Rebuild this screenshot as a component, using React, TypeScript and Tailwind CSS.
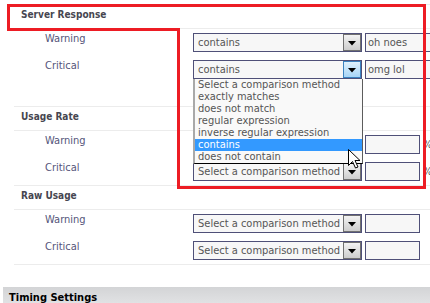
import React from 'react';

const font = "font-['DejaVu_Sans_Condensed','DejaVu_Sans',sans-serif]";

function Arrow({ focused }: { focused?: boolean }) {
  return (
    <div
      className={`flex h-full w-[18px] shrink-0 items-center justify-center border ${
        focused
          ? 'border-[#3b82c0] bg-gradient-to-b from-[#dff1fd] to-[#a7d5f6]'
          : 'border-[#707070] bg-gradient-to-b from-[#f3f3f3] to-[#cdcdcd]'
      }`}
    >
      <svg width="8" height="5" viewBox="0 0 8 5" className="mt-[2px]">
        <path d="M0 0h8L4 4.5z" fill="#000" />
      </svg>
    </div>
  );
}

const options = [
  'Select a comparison method',
  'exactly matches',
  'does not match',
  'regular expression',
  'inverse regular expression',
  'contains',
  'does not contain',
];

function Select({ value, open }: { value: string; open?: boolean }) {
  return (
    <div className="relative flex h-[19px] w-[169px] shrink-0 border border-[#4f5078] bg-[#f7f7f7]">
      <div className="flex-1 whitespace-nowrap pl-[4px] text-[11px] leading-[17px] text-[#555]">{value}</div>
      <Arrow focused={open} />
      {open && (
        <div className="absolute left-[-1px] top-[18px] z-10 w-[170px] border-b border-l-2 border-r border-b-black border-l-[#a9a9a9] border-r-[#5c5c5c] bg-[#f9f9f9]">
          {options.map(o => (
            <div
              key={o}
              className={`h-[12px] whitespace-nowrap pl-[3px] text-[11px] leading-[12px] ${
                o === 'contains' ? 'bg-[#3399ff] text-white' : 'text-[#555]'
              }`}
            >
              {o}
            </div>
          ))}
        </div>
      )}
    </div>
  );
}

function Row({
  label,
  value,
  text,
  wide,
  pct,
  open,
}: {
  label: string;
  value: string;
  text?: string;
  wide?: boolean;
  pct?: boolean;
  open?: boolean;
}) {
  return (
    <div className="flex h-[27px]">
      <div className="w-[179px] shrink-0 pl-[31px] pt-[3px] text-[11px] leading-[13px] text-[#55557a]">{label}</div>
      <div className="mt-[4px] flex shrink-0 items-start">
        <Select value={value} open={open} />
        <div
          className={`ml-[3px] h-[19px] shrink-0 border border-[#4f5078] bg-[#f7f7f7] pl-[2px] text-[11px] leading-[17px] text-[#555] ${
            wide ? 'w-[90px]' : 'w-[55px]'
          }`}
        >
          {text}
        </div>
        {pct && <span className="ml-[3px] text-[11px] leading-[19px] text-[#555]">%</span>}
      </div>
    </div>
  );
}

function Header({ title }: { title: string }) {
  return (
    <div className="h-[24px] border-b border-[#ececec] pl-[7px] pt-[4px] text-[10px] font-bold leading-[12px] text-[#464650]">
      {title}
    </div>
  );
}

export default function App() {
  return (
    <div className={`relative h-[303px] w-[430px] overflow-hidden bg-white ${font}`}>
      <div className="pt-[4px]">
        <div className="ml-[14px] border-t border-[#ececec]">
          <Header title="Server Response" />
          <div className="border-b border-[#ececec]">
            <Row label="Warning" value="contains" text="oh noes" wide />
            <Row label="Critical" value="contains" text="omg lol" wide open />
            <div className="h-[23px]" />
          </div>

          <Header title="Usage Rate" />
          <div className="border-b border-[#ececec]">
            <Row label="Warning" value="Select a comparison method" pct />
            <Row label="Critical" value="Select a comparison method" pct />
          </div>

          <Header title="Raw Usage" />
          <div className="border-b border-[#ececec]">
            <Row label="Warning" value="Select a comparison method" />
            <Row label="Critical" value="Select a comparison method" />
          </div>
        </div>

        <div className="ml-[3px] mt-[22px] h-[20px] bg-gradient-to-b from-[#d3d4d6] to-[#e4e5e7] pl-[6px] pt-[4px] text-[11px] font-bold leading-[13px] text-black">
          Timing Settings
        </div>
      </div>

      {/* red annotation */}
      <svg className="pointer-events-none absolute left-0 top-0 z-20" width="430" height="303">
        <path
          d="M8.5 5.5H424.5V187.5H178.5V29.5H8.5Z"
          fill="none"
          stroke="#ed1c24"
          strokeWidth="3"
        />
      </svg>

      {/* mouse cursor */}
      <svg className="absolute left-[348px] top-[149px] z-30" width="13" height="20" viewBox="0 0 13 20">
        <path d="M0.5 0.5V16.5L4.5 12.5L7.5 19L10 18L7 11.5H12Z" fill="#fff" stroke="#000" strokeWidth="1" strokeLinejoin="round" />
      </svg>
    </div>
  );
}
